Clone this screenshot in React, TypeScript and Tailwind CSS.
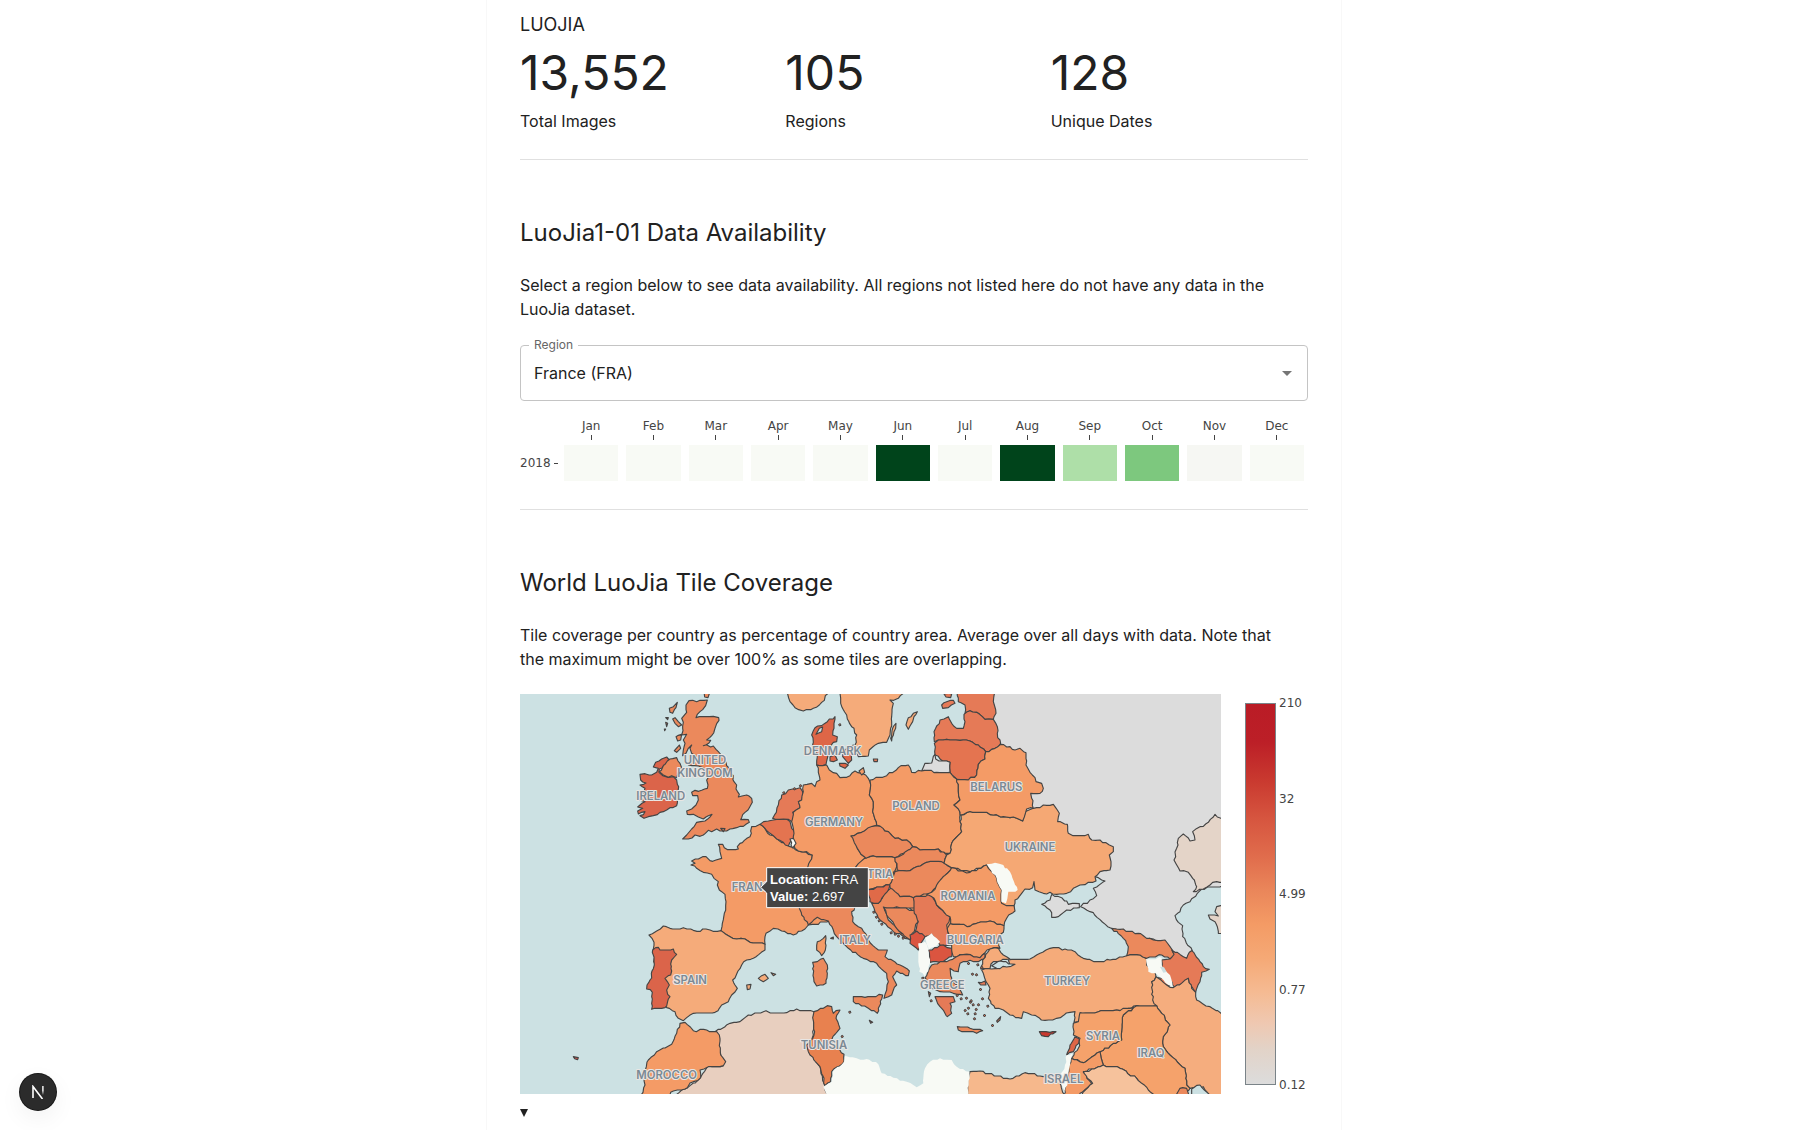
/**
 * LuoJia dataset overview
 * Totals, monthly availability per region and world tile coverage
 */

import { useState } from 'react';

const stats = [
  { value: '13,552', label: 'Total Images' },
  { value: '105', label: 'Regions' },
  { value: '128', label: 'Unique Dates' },
];

const months = [
  { name: 'Jan', color: 'bg-[#f8faf5]' },
  { name: 'Feb', color: 'bg-[#f8faf5]' },
  { name: 'Mar', color: 'bg-[#f8faf5]' },
  { name: 'Apr', color: 'bg-[#f8faf5]' },
  { name: 'May', color: 'bg-[#f8faf5]' },
  { name: 'Jun', color: 'bg-[#00441b]' },
  { name: 'Jul', color: 'bg-[#f8faf5]' },
  { name: 'Aug', color: 'bg-[#00441b]' },
  { name: 'Sep', color: 'bg-[#aedfa8]' },
  { name: 'Oct', color: 'bg-[#7dc87e]' },
  { name: 'Nov', color: 'bg-[#f6f7f3]' },
  { name: 'Dec', color: 'bg-[#f8faf5]' },
];

const scale = ['210', '32', '4.99', '0.77', '0.12'];

const NO_DATA = '#f8faf5';
const SEA = '#cce1e3';
const GREY = '#dcdcdc';

// [fill, outline points]
const shapes: [string, string][] = [
  // land below the central European borders
  ['#f49b66', '1100,440 1345,430 1400,570 1400,790 1320,770 1220,700 1150,600'],
  // Russia, Kazakhstan
  [GREY, '1420,10 2150,10 2150,600 2075,612 2062,625 2040,650 2020,660 2010,680 1995,692 2005,712 2018,722 2018,755 2047,797 2030,820 2000,810 1980,795 1965,790 1950,768 1930,762 1910,762 1870,750 1840,742 1800,728 1770,704 1740,680 1712,665 1740,645 1760,632 1750,610 1785,588 1755,575 1600,500 1480,350 1420,150'],
  [GREY, '1595,658 1620,645 1626,628 1655,638 1675,658 1708,656 1708,668 1670,675 1645,695 1625,697 1620,675'],
  ['#e4d4c8', '2150,402 2133,400 2115,388 2095,412 2070,425 2048,440 2055,465 2040,468 2020,447 2005,460 2000,490 1992,525 2010,558 2035,562 2048,580 2060,605 2050,620 2080,612 2100,600 2120,590 2150,597'],
  ['#e4d4c8', '2150,658 2120,665 2115,680 2125,693 2095,690 2100,702 2115,710 2125,745 2150,747'],
  // Scandinavia
  ['#f5ab7a', '833,10 833,27 840,50 855,68 880,78 910,70 935,52 952,27 960,10'],
  ['#f5ab7a', '990,10 992,55 1010,90 1025,125 1040,150 1035,180 1035,200 1045,215 1075,213 1078,195 1105,175 1130,172 1140,150 1145,110 1150,55 1140,45 1165,40 1190,20 1190,10'],
  ['#f5ab7a', '1195,98 1210,85 1222,80 1212,95 1208,110 1195,133 1188,120'],
  ['#f5ab7a', '1142,160 1148,130 1158,115 1152,140 1145,168'],
  ['#e57a57', '1090,222 1103,222 1102,230 1092,230'],
  ['#de6647', '905,150 915,128 935,122 952,110 975,95 972,115 968,150 982,155 980,170 970,172 960,185 955,200 952,220 948,238 920,240 922,215 912,190'],
  [SEA, '918,148 928,130 938,126 935,140'],
  ['#de6647', '960,215 975,210 982,225 970,230 960,228'],
  ['#de6647', '995,195 1015,190 1030,180 1025,225 1015,235 998,215'],
  ['#de6647', '988,235 1015,240 1005,250 990,243'],
  // Baltics
  ['#e57a57', '1340,10 1345,50 1365,60 1365,85 1380,77 1400,82 1425,103 1450,103 1458,85 1450,50 1455,10'],
  ['#e57a57', '1295,60 1310,50 1330,46 1335,55 1315,68 1298,70'],
  ['#e57a57', '1302,27 1325,27 1322,38 1308,36'],
  ['#e57a57', '1273,170 1272,140 1290,105 1315,95 1325,115 1340,130 1360,130 1365,110 1362,88 1380,77 1400,82 1425,103 1450,103 1462,125 1462,145 1472,175 1455,190 1427,200 1405,180 1380,168 1350,166 1310,163 1285,165'],
  ['#e47450', '1273,175 1285,165 1310,163 1350,166 1380,168 1405,180 1427,200 1425,222 1405,238 1400,270 1375,285 1340,283 1320,262 1320,232 1290,222 1275,210'],
  [GREY, '1235,258 1245,235 1265,234 1275,208 1277,222 1320,232 1320,262 1280,262'],
  // British Isles
  ['#eb895c', '537,47 548,46 560,50 592,45 587,62 570,80 558,98 610,94 626,98 627,106 615,130 605,152 590,165 602,166 597,174 580,182 610,183 625,200 640,215 648,232 660,262 670,272 672,290 680,300 678,312 688,328 685,336 710,330 725,340 727,352 718,368 705,382 695,398 692,404 715,404 718,412 700,424 680,428 660,432 638,438 620,432 605,440 595,436 580,450 570,454 555,450 535,462 518,462 530,450 545,432 560,412 585,408 606,388 595,392 580,402 565,396 550,388 532,388 530,378 545,372 558,360 565,345 563,332 548,332 545,322 555,316 575,316 592,310 594,300 590,285 597,275 590,265 580,248 565,243 535,240 545,225 555,212 545,205 540,190 545,180 535,190 528,205 518,212 520,195 525,175 520,165 530,148 515,150 518,130 520,112 515,100 530,82 528,60'],
  ['#eb895c', '478,70 490,65 502,52 498,68 488,85 480,82'],
  ['#eb895c', '488,102 495,98 505,110 515,120 505,125 495,115'],
  ['#eb895c', '467,98 475,98 473,104'],
  ['#eb895c', '467,112 473,115 470,125'],
  ['#eb895c', '463,132 467,132 464,137'],
  ['#eb895c', '498,155 515,148 512,165 503,168'],
  ['#eb895c', '493,197 508,180 512,190 500,202'],
  ['#eb895c', '582,20 600,20 594,38 584,36'],
  ['#eb895c', '632,430 645,431 640,440'],
  ['#db644a', '430,246 437,232 455,222 470,216 478,225 462,240 448,252 447,262 458,272 475,277 490,275 500,285 506,305 503,340 500,362 480,368 460,380 430,392 415,395 402,400 390,392 405,380 385,387 383,378 398,370 383,366 390,360 405,350 388,345 385,335 400,325 405,310 390,300 408,294 392,285 390,268 405,266 425,270 440,262 445,250'],
  ['#eb895c', '465,238 480,222 500,218 510,235 515,248 505,262 500,278 485,272 475,277 460,270 448,260'],
  // Western Europe
  ['#f49b66', '750,418 725,425 720,455 690,475 682,485 685,492 665,494 643,488 638,478 625,478 630,500 635,520 618,525 600,527 588,515 545,528 555,535 543,540 560,550 580,562 605,568 612,580 625,590 622,600 628,615 645,628 648,650 643,685 637,715 633,737 655,752 680,762 705,762 720,772 765,778 765,755 768,745 790,730 815,738 850,750 875,738 895,720 1000,700 1000,560 895,548 907,510 865,498 840,485 780,450'],
  ['#e47450', '750,418 775,408 790,405 820,402 840,410 845,430 855,445 853,460 840,472 835,483 820,472 800,462 780,445 765,430'],
  ['#e57a57', '788,400 805,360 815,330 835,315 870,308 878,320 875,345 865,350 870,368 848,382 855,395 845,410 820,402 795,402'],
  ['#f49b66', '880,300 905,295 915,305 920,290 930,285 925,262 920,240 950,240 958,255 980,265 990,278 1020,272 1035,258 1055,265 1075,280 1082,300 1078,330 1090,350 1088,380 1100,420 1075,432 1055,442 1023,453 1035,470 1042,490 1068,520 1038,545 1040,600 895,600 893,548 907,510 890,500 865,498 855,490 850,455 850,430 845,410 850,382 870,368 865,350 875,345 880,320'],
  ['#f49b66', '1047,258 1060,248 1064,262 1055,270'],
  [NO_DATA, '840,462 850,460 858,475 848,489'],
  ['#f49b66', '1080,285 1130,272 1165,248 1195,240 1205,262 1235,258 1320,262 1340,282 1345,310 1350,345 1332,360 1348,375 1350,410 1355,440 1325,475 1320,505 1305,505 1285,492 1230,495 1208,485 1190,465 1155,460 1135,440 1100,420 1088,380 1090,350 1078,330 1082,300'],
  ['#f5ab7a', '417,750 440,738 460,723 480,730 520,728 550,736 600,735 633,737 655,752 680,762 705,762 720,772 765,778 765,795 730,820 710,825 695,840 668,885 682,910 665,930 655,950 635,960 615,982 550,985 530,998 520,1007 505,1000 495,980 470,968 440,900 430,792 432,772'],
  ['#db644a', '428,795 445,787 450,795 490,792 500,808 485,825 482,870 465,880 478,900 470,915 480,935 465,968 425,973 427,922 410,912 420,885 433,840'],
  ['#f5ab7a', '710,900 723,898 720,912 712,914'],
  ['#f5ab7a', '745,880 765,868 775,880 760,890'],
  ['#f5ab7a', '783,863 797,868 790,872'],
  ['#d8524a', '190,1115 205,1118 203,1124 194,1121'],
  ['#f49b66', '922,770 940,760 947,752 946,795 935,812 920,795'],
  ['#eb895c', '908,832 922,830 940,820 952,840 948,895 920,903 912,890'],
  ['#eb895c', '868,600 868,670 875,690 895,720 922,697 955,708 970,735 980,755 1015,790 1060,820 1100,835 1130,865 1135,890 1130,915 1122,940 1145,930 1160,900 1148,875 1160,858 1195,872 1198,858 1170,840 1125,815 1132,795 1105,795 1075,765 1055,730 1028,710 1025,680 1035,665 1100,600'],
  ['#eb895c', '1030,935 1065,937 1118,930 1102,985 1075,970 1030,950'],
  ['#eb895c', '962,760 970,756 970,762'],
  ['#c8392f', '1078,1006 1088,1012 1082,1015'],
  // Central Europe and the Balkans
  ['#f49b66', '1038,545 1068,518 1090,512 1155,517 1160,545 1150,562 1150,580 1138,600 1090,610 1030,610'],
  ['#eb895c', '1023,453 1055,442 1075,428 1100,422 1135,440 1155,460 1190,465 1208,485 1180,505 1155,518 1090,512 1068,520 1042,490'],
  ['#eb895c', '1155,518 1180,508 1208,485 1230,495 1285,492 1310,510 1302,535 1250,532 1220,545 1190,558 1162,555'],
  ['#eb895c', '1138,600 1155,560 1190,558 1220,545 1250,532 1295,530 1325,548 1300,575 1280,605 1262,625 1210,638 1170,635 1142,612'],
  ['#eb895c', '1130,620 1142,610 1170,635 1210,638 1222,672 1160,665 1122,668 1135,705 1190,755 1195,762 1150,740 1110,705 1095,680 1085,655 1105,655'],
  ['#e06a48', '1070,615 1140,600 1132,620 1115,640 1105,655 1080,650'],
  ['#eb895c', '1120,666 1160,668 1215,675 1225,700 1215,730 1200,765 1160,730 1130,690'],
  ['#e57a57', '1210,638 1265,628 1280,660 1320,695 1310,720 1325,780 1290,780 1265,748 1240,760 1215,738 1225,710 1213,685'],
  ['#db5540', '1200,750 1220,738 1245,755 1225,795 1200,775'],
  ['#db5540', '1255,795 1300,780 1325,790 1325,815 1290,832 1260,832'],
  ['#f5a874', '1353,390 1380,378 1430,382 1450,390 1480,395 1500,398 1520,400 1538,408 1545,380 1570,370 1590,368 1600,360 1630,358 1648,385 1643,410 1672,418 1675,445 1700,452 1735,448 1745,465 1770,465 1810,485 1810,500 1798,510 1803,530 1800,555 1770,560 1755,575 1758,588 1735,592 1710,600 1690,610 1670,625 1640,628 1620,622 1600,625 1575,615 1572,590 1568,608 1545,612 1535,625 1515,645 1512,675 1475,655 1430,540 1380,560 1325,548 1302,535 1310,510 1320,505 1325,475 1355,440 1350,410'],
  ['#f49b66', '1340,283 1375,285 1400,270 1405,238 1425,222 1427,200 1455,190 1472,178 1500,185 1515,195 1530,190 1548,203 1548,240 1560,262 1575,278 1578,290 1595,295 1600,310 1590,325 1562,325 1565,340 1570,370 1550,372 1538,408 1520,400 1500,398 1480,395 1450,390 1430,382 1380,380 1350,390 1345,372 1332,360 1350,345 1345,310'],
  ['#f49b66', '1325,548 1345,558 1380,562 1430,540 1460,580 1475,615 1475,655 1490,662 1512,662 1515,678 1490,700 1482,722 1440,708 1400,715 1380,724 1322,718 1320,695 1300,678 1280,660 1272,640 1250,628 1265,622 1280,600 1300,575'],
  ['#f49b66', '1320,716 1380,724 1400,715 1440,708 1482,722 1480,742 1465,755 1470,790 1440,792 1425,803 1410,820 1370,808 1330,815 1325,780 1312,730'],
  ['#eb895c', '1245,878 1265,840 1320,825 1350,810 1370,808 1410,818 1425,805 1425,822 1405,830 1380,826 1350,835 1345,860 1320,850 1325,890 1340,900 1358,930 1330,925 1290,920 1265,910'],
  ['#e57a57', '1275,935 1330,935 1335,950 1320,955 1325,985 1312,995 1290,965'],
  ['#eb895c', '1342,1025 1380,1030 1418,1037 1400,1045 1345,1035'],
  ['#e57a57', '1255,920 1262,925 1258,935'],
  ['#e57a57', '1460,1008 1472,995 1470,1005 1462,1012'],
  ['#e57a57', '1405,892 1425,888 1428,900 1412,900'],
  // Turkey and the Caucasus
  ['#f5ab7a', '1418,825 1440,792 1465,790 1480,810 1500,822 1450,830 1440,850 1412,852'],
  ['#f5ab7a', '1415,855 1445,852 1500,840 1495,825 1560,822 1590,805 1620,790 1665,792 1695,800 1720,820 1760,830 1800,825 1850,812 1890,810 1910,822 1910,840 1930,858 1938,875 1925,890 1930,920 1930,945 1940,962 1880,962 1845,975 1820,975 1765,980 1720,985 1705,1010 1692,1012 1695,980 1680,982 1640,1000 1605,1006 1565,990 1540,980 1535,1000 1500,990 1480,975 1455,970 1435,940 1440,910 1428,890 1420,865'],
  [SEA, '1445,842 1470,828 1515,838 1490,846 1460,850'],
  ['#eb895c', '1805,730 1830,733 1885,745 1930,765 1965,765 1980,785 1995,810 1980,822 1955,810 1910,820 1890,810 1850,812 1855,785 1840,760'],
  ['#e57a57', '1985,795 2020,815 2030,820 2045,797 2070,830 2080,845 2098,853 2075,862 2070,890 2057,922 2040,900 2035,880 1995,908 1980,885 1955,850 1955,825 1980,822 1992,808'],
  ['#e57a57', '1940,878 1960,880 1980,902 1960,900'],
  // Middle East
  ['#f5ad7e', '1940,962 1928,945 1925,890 1938,875 1970,900 1990,908 2035,880 2045,910 2057,922 2060,945 2100,965 2133,985 2150,990 2150,1240 2100,1240 2080,1205 2040,1210 2030,1200 2025,1150 1980,1110 1960,1085 1960,1055 1980,1020 1955,985'],
  ['#f5a26b', '1880,962 1940,962 1955,985 1980,1020 1960,1055 1960,1085 1980,1110 2025,1150 2030,1200 2040,1210 2020,1240 1940,1240 1880,1180 1830,1150 1780,1140 1770,1100 1835,1065 1840,990 1870,968'],
  [SEA, '2045,1212 2070,1200 2100,1230 2045,1235'],
  ['#eb895c', '1995,1235 2010,1210 2030,1210 2038,1235'],
  ['#f5a26b', '1705,1010 1710,983 1765,980 1820,975 1870,968 1840,990 1835,1065 1770,1100 1720,1133 1685,1120 1705,1090 1710,1060 1690,1050 1690,1015'],
  ['#de6647', '1695,1055 1708,1062 1690,1100 1670,1110 1680,1080'],
  ['#f49b66', '1683,1120 1720,1133 1770,1100 1780,1140 1720,1160 1745,1195 1710,1225 1700,1240 1660,1240'],
  ['#f6c29c', '1780,1140 1830,1150 1880,1180 1945,1240 1700,1240 1748,1195 1720,1162'],
  ['#c8392f', '1588,1040 1620,1042 1638,1040 1615,1055 1595,1052'],
  // North Africa
  ['#e8cfbf', '615,1040 660,1015 690,1010 715,990 760,980 830,983 860,972 912,980 910,1050 895,1090 930,1145 945,1205 952,1240 480,1240 525,1212 570,1180 595,1142 640,1142'],
  ['#f49b66', '510,1015 525,1012 550,1037 590,1035 620,1040 628,1050 632,1110 647,1130 640,1142 595,1145 570,1155 572,1178 550,1190 525,1212 490,1218 470,1240 388,1240 405,1200 400,1170 415,1125 440,1100 485,1078 500,1045'],
  ['#e8814f', '912,980 952,962 965,965 970,985 990,975 978,1000 990,1030 965,1065 1002,1108 1002,1130 965,1160 962,1190 945,1202 930,1145 895,1100 890,1080 912,1050 910,990'],
  ['#f6b88c', '1375,1240 1375,1180 1380,1160 1410,1158 1500,1182 1545,1163 1600,1175 1645,1172 1665,1240'],
];

// areas without tiles have no outline
const blanks = [
  '1430,538 1455,533 1480,540 1500,560 1512,590 1523,615 1495,620 1488,655 1474,650 1475,615 1460,580',
  '1245,758 1265,745 1290,770 1275,785 1255,795',
  '1225,775 1245,770 1255,795 1260,835 1245,876 1228,860',
  '1908,822 1955,818 1955,840 1980,870 1988,905 1975,900 1945,872 1915,860',
  '1670,1110 1688,1105 1680,1140 1665,1227 1655,1200 1648,1175 1665,1140',
  '940,1205 965,1190 968,1160 1002,1130 1005,1112 1040,1120 1070,1122 1105,1138 1115,1165 1150,1178 1190,1190 1220,1207 1240,1195 1245,1150 1260,1130 1290,1120 1325,1125 1340,1145 1378,1160 1373,1240 950,1240',
];

// small islands along the Croatian and Aegean coasts
const islets = [
  [1088, 680], [1096, 695], [1104, 706], [1112, 716], [1140, 742], [1152, 746], [1162, 752], [1176, 758],
  [1338, 930], [1350, 940], [1366, 938], [1378, 950], [1386, 958], [1372, 968], [1362, 975], [1380, 946],
  [1395, 972], [1402, 958], [1392, 985], [1414, 940], [1420, 990], [1396, 868], [1400, 838], [1412, 846],
  [1384, 866], [1372, 834], [1444, 1020], [1260, 946], [1235, 878], [1016, 980], [993, 1053], [986, 118],
  [1430, 962], [1408, 912], [1370, 985], [1390, 1000], [818, 322], [850, 310], [868, 301],
];

const countries: [string, number, number, 'start' | 'middle' | 'end'][] = [
  ['UNITED', 585, 237, 'middle'],
  ['KINGDOM', 585, 277, 'middle'],
  ['IRELAND', 452, 344, 'middle'],
  ['DENMARK', 968, 209, 'middle'],
  ['GERMANY', 972, 422, 'middle'],
  ['POLAND', 1218, 374, 'middle'],
  ['BELARUS', 1459, 318, 'middle'],
  ['UKRAINE', 1560, 497, 'middle'],
  ['FRANCE', 665, 619, 'start'],
  ['AUSTRIA', 1150, 578, 'end'],
  ['ROMANIA', 1374, 644, 'middle'],
  ['BULGARIA', 1396, 776, 'middle'],
  ['ITALY', 1035, 776, 'middle'],
  ['GREECE', 1297, 911, 'middle'],
  ['TURKEY', 1671, 900, 'middle'],
  ['SYRIA', 1779, 1065, 'middle'],
  ['IRAQ', 1923, 1117, 'middle'],
  ['ISRAEL', 1661, 1193, 'middle'],
  ['TUNISIA', 942, 1091, 'middle'],
  ['MOROCCO', 470, 1181, 'middle'],
  ['SPAIN', 540, 898, 'middle'],
];

// Bends every segment a little. The bend depends on the end points only,
// so that two countries get the same line where they meet.
function coast(points: string) {
  const list = points.split(' ').map((p) => p.split(',').map(Number));
  const out: string[] = [];
  list.forEach(([x1, y1], i) => {
    const [x2, y2] = list[(i + 1) % list.length];
    out.push(`${x1},${y1}`);
    const dx = Math.abs(x2 - x1);
    const dy = Math.abs(y2 - y1);
    const steps = Math.floor(Math.hypot(dx, dy) / 9);
    for (let s = 1; s < steps; s++) {
      const x = x1 + ((x2 - x1) * s) / steps;
      const y = y1 + ((y2 - y1) * s) / steps;
      const seed = Math.round(x) * 7 + Math.round(y) * 13;
      out.push(`${Math.round(x + (seed % 5) - 2)},${Math.round(y + (seed % 7) - 3)}`);
    }
  });
  return out.join(' ');
}

function CoverageMap() {
  return (
    <svg
      viewBox="30 27 2103 1200"
      preserveAspectRatio="xMidYMid slice"
      className="block h-auto w-full min-w-0 flex-1 bg-[#cce1e3]"
      role="img"
      aria-label="Tile coverage per country"
    >
      <g stroke="#444" strokeWidth="3.4" strokeLinejoin="round">
        {shapes.map(([fill, points], i) => (
          <polygon key={i} fill={fill} points={coast(points)} />
        ))}
      </g>
      {blanks.map((points) => (
        <polygon key={points} fill={NO_DATA} points={coast(points)} />
      ))}
      <path d="M1950 845l12 2 8 14-10 2z" fill={SEA} />
      <g fill="#e57a57" stroke="#444" strokeWidth="3">
        {islets.map(([x, y]) => (
          <path key={`${x}-${y}`} d={`M${x} ${y}l5-2 2 5-5 2z`} />
        ))}
      </g>
      <g
        fill="#7b8994"
        stroke="#e9e6e3"
        strokeWidth="6"
        strokeLinejoin="round"
        paintOrder="stroke"
        className="font-['Inter',sans-serif] text-[34px] font-semibold"
      >
        {countries.map(([name, x, y, anchor]) => (
          <text key={name} x={x} y={y} textAnchor={anchor}>
            {name}
          </text>
        ))}
      </g>
      <path d="M770 548h305v120H770v-44l-18-17 18-17z" fill="#444" stroke="#fff" strokeWidth="3" />
      <g fill="#fff" className="font-['Liberation_Sans',Arial,sans-serif] text-[39px]">
        <text x="780" y="597">
          <tspan className="font-bold">Location:</tspan> FRA
        </text>
        <text x="780" y="648">
          <tspan className="font-bold">Value:</tspan> 2.697
        </text>
      </g>
    </svg>
  );
}

function ColorBar() {
  return (
    <div className="my-[9px] flex w-[63px] gap-[3px]">
      <div className="w-[31px] shrink-0 border border-[#7a8388] bg-[linear-gradient(to_bottom,#ba1c26_0%,#bc1f27_10%,#c9392f_20%,#d6553f_30%,#e06c4c_40%,#ea865a_49%,#f49b65_58%,#f5a976_67%,#f5bb93_76%,#efc8b1_84%,#e2d3c8_91%,#dcdcdc_100%)]" />
      <div className="-my-2 flex flex-col justify-between font-['DejaVu_Sans',Verdana,sans-serif] text-xs leading-4 text-[#444]">
        {scale.map((tick) => (
          <span key={tick}>{tick}</span>
        ))}
      </div>
    </div>
  );
}

export default function App() {
  const [region, setRegion] = useState('FRA');
  const [open, setOpen] = useState(true);

  return (
    <div className="min-h-screen bg-white pl-[15px] font-['Inter',sans-serif] text-base text-[#212121]">
      <main className="mx-auto max-w-[856px] border-x border-[#f8f8f8] px-[33px] pt-[9px] pb-7">
        <section>
          <h2 className="text-lg leading-8">LUOJIA</h2>
          <div className="grid grid-cols-3 gap-2">
            {stats.map((stat) => (
              <div key={stat.label}>
                <p className="text-5xl leading-[64px]">{stat.value}</p>
                <p className="mt-1 leading-6">{stat.label}</p>
              </div>
            ))}
          </div>
        </section>

        <hr className="mt-[26px] border-[#e0e0e0]" />

        <section className="pt-[57px]">
          <h2 className="text-2xl leading-8">LuoJia1-01 Data Availability</h2>
          <p className="mt-6 pr-4">
            Select a region below to see data availability. All regions not listed here do not have any data in the
            LuoJia dataset.
          </p>

          <div className="relative mt-6">
            <label htmlFor="region" className="absolute -top-2 left-[9px] bg-white px-[5px] text-xs leading-4 text-[#666]">
              Region
            </label>
            <select
              id="region"
              value={region}
              onChange={(e) => setRegion(e.target.value)}
              className="h-14 w-full appearance-none rounded border border-[#c4c4c4] bg-transparent px-[13px]"
            >
              <option value="FRA">France (FRA)</option>
            </select>
            <svg viewBox="0 0 24 24" className="pointer-events-none absolute top-4 right-[9px] size-6" fill="#757575">
              <path d="M7 10l5 5 5-5z" />
            </svg>
          </div>

          <div className="mt-[17px] mr-1 flex items-end gap-1.5 font-['DejaVu_Sans',Verdana,sans-serif] text-xs text-[#444]">
            <div className="flex h-9 w-[38px] items-center justify-between">
              <span>2018</span>
              <span className="h-px w-1 bg-[#444]" />
            </div>
            <div className="grid flex-1 grid-cols-12 gap-2">
              {months.map((month) => (
                <div key={month.name} className="flex flex-col items-center">
                  <span className="leading-4">{month.name}</span>
                  <span className="mt-px h-[5px] w-px bg-[#444]" />
                  <div className={`mt-[5px] h-9 w-full ${month.color}`} />
                </div>
              ))}
            </div>
          </div>
        </section>

        <hr className="mt-7 border-[#e0e0e0]" />

        <section className="pt-[57px]">
          <h2 className="text-2xl leading-8">World LuoJia Tile Coverage</h2>
          <p className="mt-6 pr-4">
            Tile coverage per country as percentage of country area. Average over all days with data. Note that the
            maximum might be over 100% as some tiles are overlapping.
          </p>
          <div className="mt-[23px] flex gap-6">
            <CoverageMap />
            <ColorBar />
          </div>
          <button
            type="button"
            aria-label="Toggle details"
            aria-expanded={open}
            onClick={() => setOpen(!open)}
            className="mt-[15px] block"
          >
            <svg viewBox="0 0 8 8" className="size-2" fill="#212121">
              <path d="M0 0h8L4 8z" />
            </svg>
          </button>
        </section>
      </main>

      <button
        type="button"
        aria-label="Open dev tools"
        className="fixed bottom-5 left-5 flex size-9 items-center justify-center rounded-full bg-[#2b2b2b] shadow-[0_0_0_1px_#171717,0_8px_24px_rgba(0,0,0,0.06)]"
      >
        <svg viewBox="0 0 12 14" className="h-3.5 w-3" fill="none">
          <defs>
            <linearGradient id="fade" x1="0" y1="0" x2="0" y2="1">
              <stop offset="0.5" stopColor="#fff" />
              <stop offset="1" stopColor="#fff" stopOpacity="0" />
            </linearGradient>
          </defs>
          <path d="M1 13V1.5L10.5 14" stroke="#fff" strokeWidth="1.6" />
          <path d="M10.2 1h1.4v9h-1.4z" fill="url(#fade)" />
        </svg>
      </button>
    </div>
  );
}
